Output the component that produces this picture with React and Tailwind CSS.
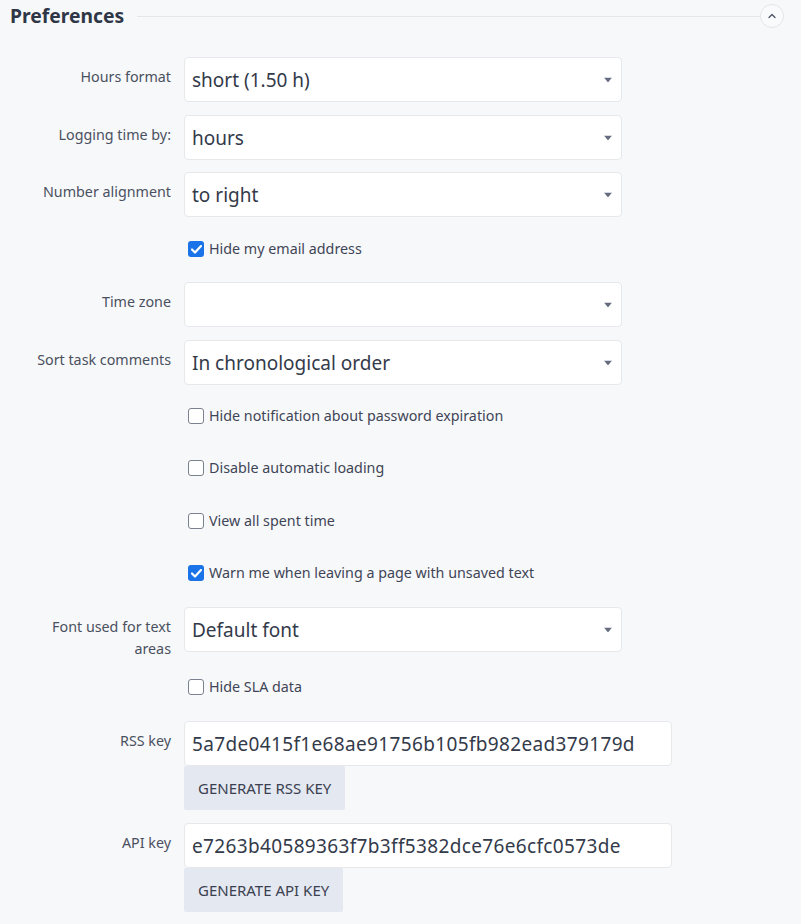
import { ChevronUp } from 'lucide-react';

const font = { fontFamily: '"Noto Sans", "Open Sans", sans-serif' };

const Caret = () => (
  <svg width="8" height="5" viewBox="0 0 8 5" className="absolute right-[9px] top-1/2 -translate-y-1/2">
    <path d="M0 0h8L4 5z" fill="#666c80" />
  </svg>
);

const Label = ({ children }) => (
  <div className="ml-[30px] w-[142px] shrink-0 pr-[1px] pt-[9px] text-right text-[14.3px] leading-[22px] text-[#4a5060]">
    {children}
  </div>
);

const SelectRow = ({ label, value, className = '' }) => (
  <div className={'flex h-[45px] ' + className}>
    <Label>{label}</Label>
    <div className="ml-[12px] relative w-[438px] h-[45px] bg-white border border-[#e6e8ec] rounded-[4px] flex items-center pl-[7px] pt-[1px] text-[19px] text-[#333a4a]">
      {value}
      <Caret />
    </div>
  </div>
);

const CheckRow = ({ label, checked, className = '' }) => (
  <div className={'flex items-center h-[24px] pl-[188px] ' + className}>
    {checked ? (
      <span className="w-[16px] h-[16px] rounded-[3px] bg-[#1a73e8] flex items-center justify-center">
        <svg width="11" height="9" viewBox="0 0 11 9">
          <path d="M1 4.5l3 3L10 1" stroke="white" strokeWidth="2.2" fill="none" strokeLinecap="round" strokeLinejoin="round" />
        </svg>
      </span>
    ) : (
      <span className="w-[16px] h-[16px] rounded-[3px] border border-[#7b8190] bg-white" />
    )}
    <span className="ml-[5px] -mt-[1px] text-[14.3px] text-[#3f4556]">{label}</span>
  </div>
);

const KeyRow = ({ label, value, button, className = '' }) => (
  <div className={'flex ' + className}>
    <Label>{label}</Label>
    <div className="ml-[12px] flex flex-col items-start">
      <div className="w-[488px] h-[45px] bg-white border border-[#e6e8ec] rounded-[4px] flex items-center pl-[7px] pt-[1px] text-[19px] tracking-[0.35px] text-[#333a4a]">
        {value}
      </div>
      <button className="h-[44px] px-[14px] bg-[#e4e8f0] rounded-[2px] text-[15px] text-[#3a4050]">
        {button}
      </button>
    </div>
  </div>
);

export default function App() {
  return (
    <div className="min-h-[924px] w-[801px] bg-[#f7f8fa]" style={font}>
      <div className="flex items-center h-[32px] pl-[10px] pr-[17px]">
        <h2 className="text-[19.3px] font-bold text-[#2f3646]">Preferences</h2>
        <div className="flex-1 h-px bg-[#e3e6ea] ml-[13px]" />
        <button className="w-[24px] h-[24px] rounded-full border border-[#e3e6ea] bg-[#f9fafb] flex items-center justify-center text-[#4a5060]">
          <ChevronUp size={12} strokeWidth={2.5} />
        </button>
      </div>

      <SelectRow label="Hours format" value="short (1.50 h)" className="mt-[25px]" />
      <SelectRow label="Logging time by:" value="hours" className="mt-[13px]" />
      <SelectRow label="Number alignment" value="to right" className="mt-[12px]" />
      <CheckRow label="Hide my email address" checked className="mt-[20px]" />
      <SelectRow label="Time zone" value="" className="mt-[21px]" />
      <SelectRow label="Sort task comments" value="In chronological order" className="mt-[13px]" />
      <CheckRow label="Hide notification about password expiration" className="mt-[19px]" />
      <CheckRow label="Disable automatic loading" className="mt-[28px]" />
      <CheckRow label="View all spent time" className="mt-[29px]" />
      <CheckRow label="Warn me when leaving a page with unsaved text" checked className="mt-[28px]" />
      <SelectRow label="Font used for text areas" value="Default font" className="mt-[22px]" />
      <CheckRow label="Hide SLA data" className="mt-[23px]" />
      <KeyRow
        label="RSS key"
        value="5a7de0415f1e68ae91756b105fb982ead379179d"
        button="GENERATE RSS KEY"
        className="mt-[22px]"
      />
      <KeyRow
        label="API key"
        value="e7263b40589363f7b3ff5382dce76e6cfc0573de"
        button="GENERATE API KEY"
        className="mt-[13px]"
      />
    </div>
  );
}
